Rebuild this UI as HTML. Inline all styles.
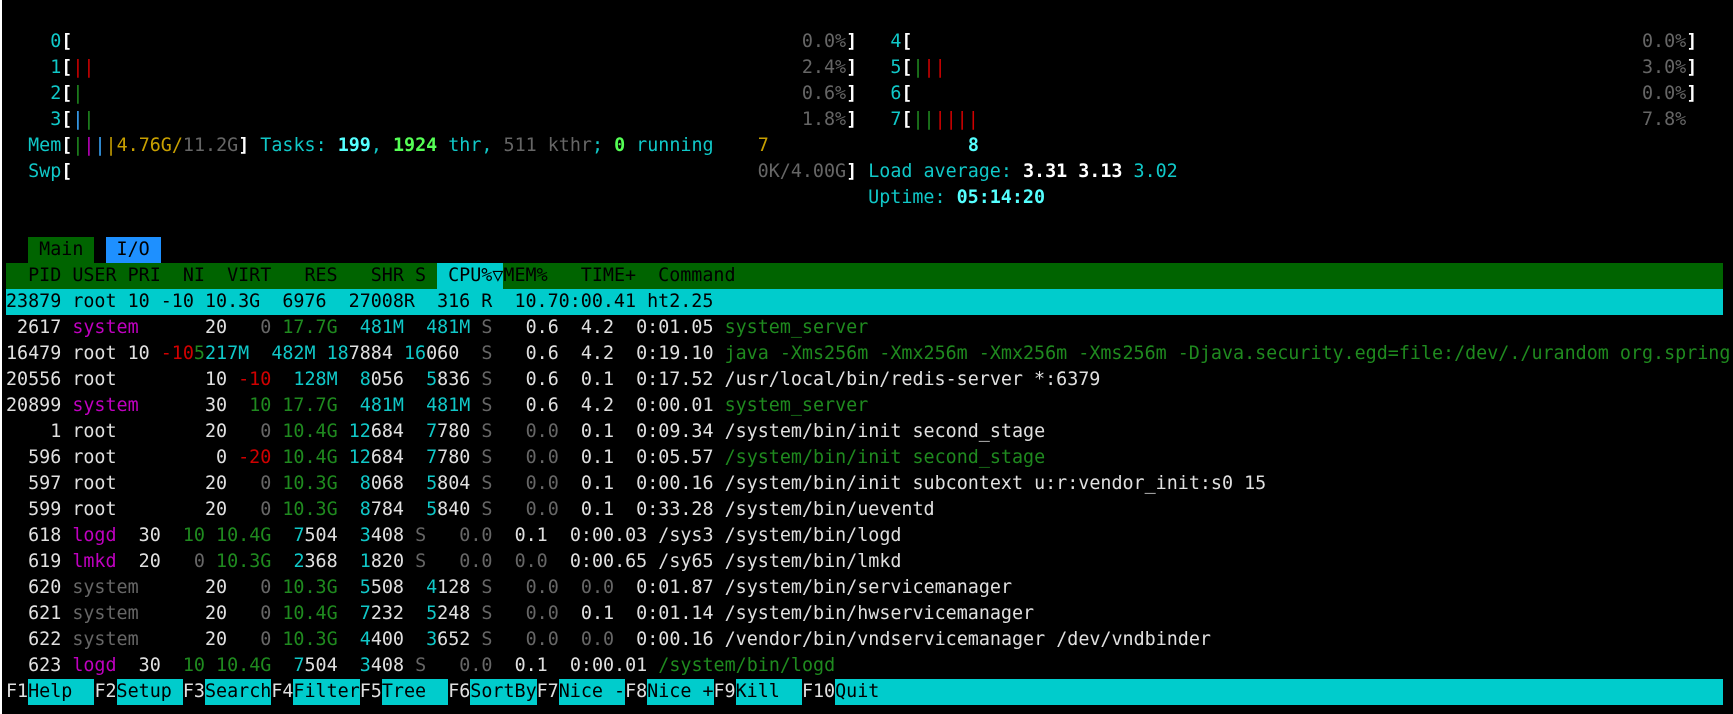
<!DOCTYPE html>
<html><head><meta charset="utf-8">
<style>
html,body{margin:0;padding:0;background:#000;width:1733px;height:714px;overflow:hidden}
#strip{position:absolute;left:0;top:0;width:2px;height:714px;background:#fff}
#t{position:absolute;left:6px;top:29px;font-family:"DejaVu Sans Mono","Liberation Mono",monospace;font-size:18.37px;color:#e0e0e0}
.l{height:26px;line-height:26px;white-space:pre;width:1717px}
.ib{display:inline-block;height:26px;vertical-align:top}
.w{color:#e0e0e0}.W{color:#fff;font-weight:bold}
.c{color:#10c8c8}.C{color:#5ff;font-weight:bold}
.g{color:#1f8a1f}.G{color:#5f5;font-weight:bold}
.r{color:#d00000}.m{color:#c000c0}.k{color:#666}.y{color:#c8a000}.b{color:#3aa8ff}
.hd{background:#006400;color:#000}
.sel{background:#00cccc;color:#000}
.cy{background:#00cccc;color:#000}
.tg{background:#006400;color:#000}
.tb{background:#1e90ff;color:#000}
</style></head><body>
<div id="strip"></div>
<div id="t">
<div class="l">    <span class="c">0</span><span class="W">[</span>                                                                  <span class="k">0.0%</span><span class="W">]</span>   <span class="c">4</span><span class="W">[</span>                                                                  <span class="k">0.0%</span><span class="W">]</span></div>
<div class="l">    <span class="c">1</span><span class="W">[</span><span class="r">||</span>                                                                <span class="k">2.4%</span><span class="W">]</span>   <span class="c">5</span><span class="W">[</span><span class="g">|</span><span class="r">||</span>                                                               <span class="k">3.0%</span><span class="W">]</span></div>
<div class="l">    <span class="c">2</span><span class="W">[</span><span class="g">|</span>                                                                 <span class="k">0.6%</span><span class="W">]</span>   <span class="c">6</span><span class="W">[</span>                                                                  <span class="k">0.0%</span><span class="W">]</span></div>
<div class="l">    <span class="c">3</span><span class="W">[</span><span class="b">|</span><span class="g">|</span>                                                                <span class="k">1.8%</span><span class="W">]</span>   <span class="c">7</span><span class="W">[</span><span class="g">||</span><span class="r">||||</span>                                                            <span class="k">7.8%</span></div>
<div class="l">  <span class="c">Mem</span><span class="W">[</span><span class="g">|</span><span class="m">|</span><span class="b">|</span><span class="y">|4.76G/</span><span class="k">11.2G</span><span class="W">]</span><span class="c"> Tasks: </span><span class="C">199</span><span class="c">, </span><span class="G">1924</span><span class="c"> thr</span><span class="c">, </span><span class="k">511 kthr</span><span class="c">; </span><span class="G">0</span><span class="c"> running</span>    <span class="y">7</span>                  <span class="C">8</span></div>
<div class="l">  <span class="c">Swp</span><span class="W">[</span>                                                              <span class="k">0K/4.00G</span><span class="W">]</span> <span class="c">Load average: </span><span class="W">3.31</span> <span class="W">3.13</span><span class="c"> 3.02</span></div>
<div class="l">                                                                              <span class="c">Uptime: </span><span class="C">05:14:20</span></div>
<div class="l"> </div>
<div class="l">  <span class="ib tg"> Main </span> <span class="ib tb"> I/O </span></div>
<div class="l hd">  PID USER PRI  NI  VIRT   RES   SHR S <span class="ib cy"> CPU%▽</span>MEM%   TIME+  Command</div>
<div class="l sel">23879 root 10 -10 10.3G  6976  27008R  316 R  10.70:00.41 ht2.25</div>
<div class="l"> 2617 <span class="m">system</span>      20   <span class="k">0</span> <span class="g">17.7G</span>  <span class="c">481M</span>  <span class="c">481M</span> <span class="k">S</span>   0.6  4.2  0:01.05 <span class="g">system_server</span></div>
<div class="l">16479 root 10 <span class="r">-10</span><span class="g">5</span><span class="c">217M</span>  <span class="c">482M</span> <span class="c">18</span>7884 <span class="c">16</span>060  <span class="k">S</span>   0.6  4.2  0:19.10 <span class="g">java -Xms256m -Xmx256m -Xmx256m -Xms256m -Djava.security.egd=file:/dev/./urandom org.spring</span></div>
<div class="l">20556 root        10 <span class="r">-10</span>  <span class="c">128M</span>  <span class="c">8</span>056  <span class="c">5</span>836 <span class="k">S</span>   0.6  0.1  0:17.52 /usr/local/bin/redis-server *:6379</div>
<div class="l">20899 <span class="m">system</span>      30  <span class="g">10</span> <span class="g">17.7G</span>  <span class="c">481M</span>  <span class="c">481M</span> <span class="k">S</span>   0.6  4.2  0:00.01 <span class="g">system_server</span></div>
<div class="l">    1 root        20   <span class="k">0</span> <span class="g">10.4G</span> <span class="c">12</span>684  <span class="c">7</span>780 <span class="k">S</span>   <span class="k">0.0</span>  0.1  0:09.34 /system/bin/init second_stage</div>
<div class="l">  596 root         0 <span class="r">-20</span> <span class="g">10.4G</span> <span class="c">12</span>684  <span class="c">7</span>780 <span class="k">S</span>   <span class="k">0.0</span>  0.1  0:05.57 <span class="g">/system/bin/init second_stage</span></div>
<div class="l">  597 root        20   <span class="k">0</span> <span class="g">10.3G</span>  <span class="c">8</span>068  <span class="c">5</span>804 <span class="k">S</span>   <span class="k">0.0</span>  0.1  0:00.16 /system/bin/init subcontext u:r:vendor_init:s0 15</div>
<div class="l">  599 root        20   <span class="k">0</span> <span class="g">10.3G</span>  <span class="c">8</span>784  <span class="c">5</span>840 <span class="k">S</span>   <span class="k">0.0</span>  0.1  0:33.28 /system/bin/ueventd</div>
<div class="l">  618 <span class="m">logd</span>  30  <span class="g">10</span> <span class="g">10.4G</span>  <span class="c">7</span>504  <span class="c">3</span>408 <span class="k">S</span>   <span class="k">0.0</span>  0.1  0:00.03 /sys3 /system/bin/logd</div>
<div class="l">  619 <span class="m">lmkd</span>  20   <span class="k">0</span> <span class="g">10.3G</span>  <span class="c">2</span>368  <span class="c">1</span>820 <span class="k">S</span>   <span class="k">0.0</span>  <span class="k">0.0</span>  0:00.65 /sy65 /system/bin/lmkd</div>
<div class="l">  620 <span class="k">system</span>      20   <span class="k">0</span> <span class="g">10.3G</span>  <span class="c">5</span>508  <span class="c">4</span>128 <span class="k">S</span>   <span class="k">0.0</span>  <span class="k">0.0</span>  0:01.87 /system/bin/servicemanager</div>
<div class="l">  621 <span class="k">system</span>      20   <span class="k">0</span> <span class="g">10.4G</span>  <span class="c">7</span>232  <span class="c">5</span>248 <span class="k">S</span>   <span class="k">0.0</span>  0.1  0:01.14 /system/bin/hwservicemanager</div>
<div class="l">  622 <span class="k">system</span>      20   <span class="k">0</span> <span class="g">10.3G</span>  <span class="c">4</span>400  <span class="c">3</span>652 <span class="k">S</span>   <span class="k">0.0</span>  <span class="k">0.0</span>  0:00.16 /vendor/bin/vndservicemanager /dev/vndbinder</div>
<div class="l">  623 <span class="m">logd</span>  30  <span class="g">10</span> <span class="g">10.4G</span>  <span class="c">7</span>504  <span class="c">3</span>408 <span class="k">S</span>   <span class="k">0.0</span>  0.1  0:00.01 <span class="g">/system/bin/logd</span></div>
<div class="l">F1<span class="ib cy">Help  </span>F2<span class="ib cy">Setup </span>F3<span class="ib cy">Search</span>F4<span class="ib cy">Filter</span>F5<span class="ib cy">Tree  </span>F6<span class="ib cy">SortBy</span>F7<span class="ib cy">Nice -</span>F8<span class="ib cy">Nice +</span>F9<span class="ib cy">Kill  </span>F10<span class="ib cy" style="width:888px">Quit</span></div>
</div>
</body></html>
